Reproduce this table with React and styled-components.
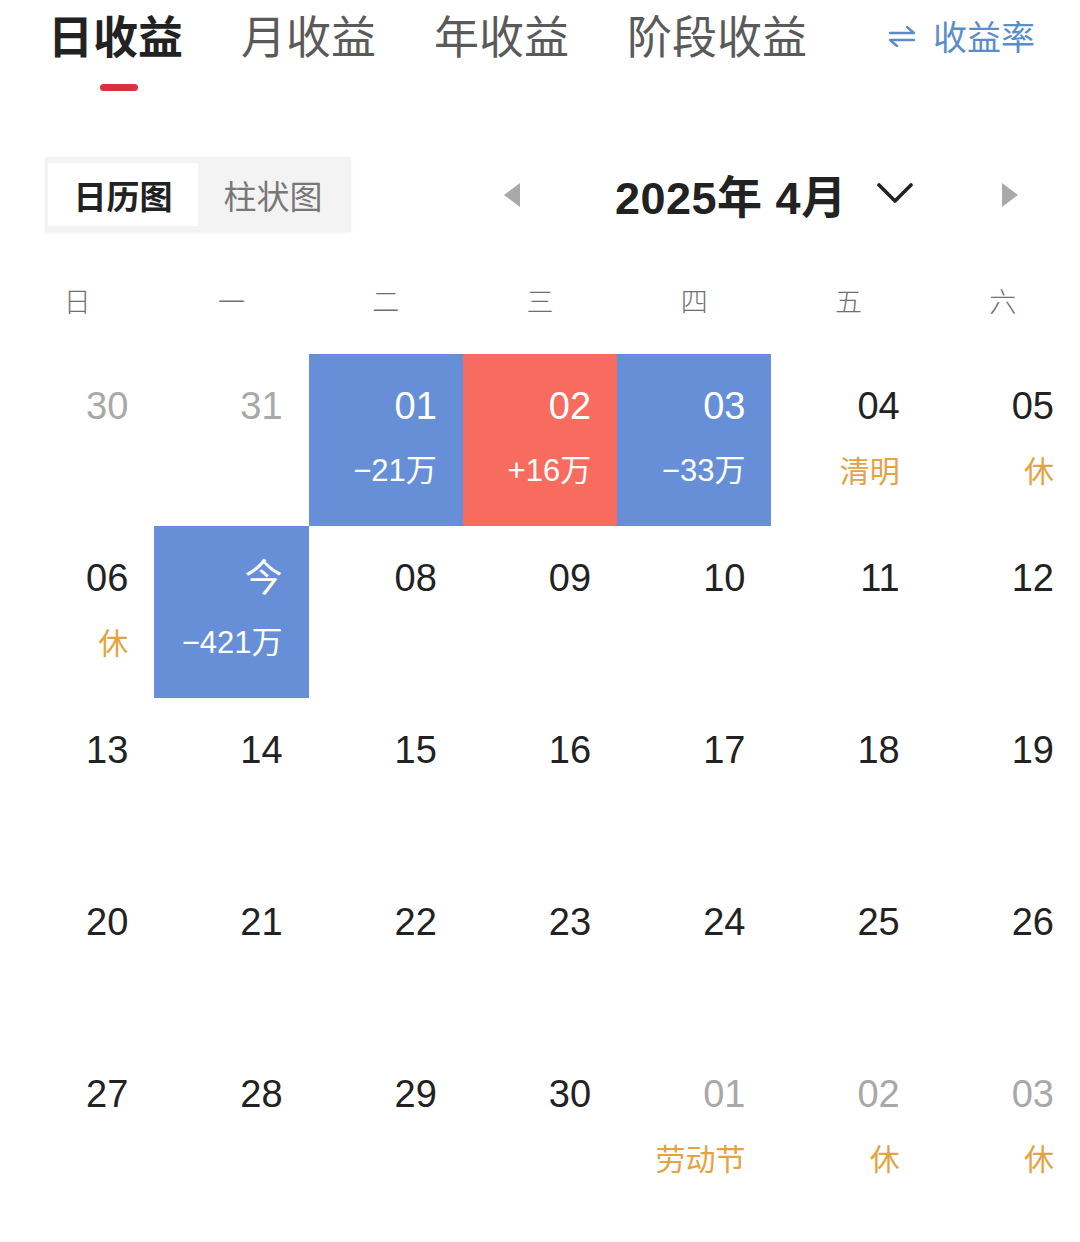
import React from "react";
import styled, { createGlobalStyle } from "styled-components";

const GlobalStyle = createGlobalStyle`
  html, body {
    margin: 0;
    padding: 0;
    background: #ffffff;
  }
  body {
    font-family: "Liberation Sans", "Noto Sans CJK SC", sans-serif;
    color: #222;
  }
`;

const tabs = ["日收益", "月收益", "年收益", "阶段收益"];
const weekdays = ["日", "一", "二", "三", "四", "五", "六"];

// tone: blue / red for days with a result, muted for days outside the month
const days = [
  { n: "30", muted: true },
  { n: "31", muted: true },
  { n: "01", tone: "blue", sub: "−21万" },
  { n: "02", tone: "red", sub: "+16万" },
  { n: "03", tone: "blue", sub: "−33万" },
  { n: "04", holiday: "清明" },
  { n: "05", holiday: "休" },
  { n: "06", holiday: "休" },
  { n: "今", tone: "blue", sub: "−421万" },
  { n: "08" },
  { n: "09" },
  { n: "10" },
  { n: "11" },
  { n: "12" },
  { n: "13" },
  { n: "14" },
  { n: "15" },
  { n: "16" },
  { n: "17" },
  { n: "18" },
  { n: "19" },
  { n: "20" },
  { n: "21" },
  { n: "22" },
  { n: "23" },
  { n: "24" },
  { n: "25" },
  { n: "26" },
  { n: "27" },
  { n: "28" },
  { n: "29" },
  { n: "30" },
  { n: "01", muted: true, holiday: "劳动节" },
  { n: "02", muted: true, holiday: "休" },
  { n: "03", muted: true, holiday: "休" },
];

const tones = {
  blue: "#668fd8",
  red: "#f76c5f",
};

const SwapIcon = () => (
  <svg width="30" height="22" viewBox="0 0 30 22" fill="none">
    <path
      d="M3 8 H27 L20 2"
      stroke="currentColor"
      strokeWidth="2.4"
      strokeLinecap="round"
      strokeLinejoin="round"
    />
    <path
      d="M27 15 H3 L10 21"
      stroke="currentColor"
      strokeWidth="2.4"
      strokeLinecap="round"
      strokeLinejoin="round"
    />
  </svg>
);

const Chevron = () => (
  <svg width="36" height="22" viewBox="0 0 36 22" fill="none">
    <path
      d="M2 3 L18 19 L34 3"
      stroke="#222"
      strokeWidth="3.6"
      strokeLinecap="round"
      strokeLinejoin="round"
    />
  </svg>
);

const Triangle = ({ dir }) => (
  <svg width="18" height="26" viewBox="0 0 18 26">
    {dir === "left" ? (
      <path d="M17 1 L1 13 L17 25 Z" fill="#a9a9a9" />
    ) : (
      <path d="M1 1 L17 13 L1 25 Z" fill="#a9a9a9" />
    )}
  </svg>
);

const App = () => {
  return (
    <Page>
      <GlobalStyle />
      <TabBar>
        {tabs.map((t, i) => (
          <Tab key={t}>
            <TabLabel active={i === 0}>{t}</TabLabel>
            {i === 0 && <Indicator />}
          </Tab>
        ))}
        <RateLink>
          <SwapIcon />
          <span>收益率</span>
        </RateLink>
      </TabBar>

      <Toolbar>
        <Segmented>
          <Segment active>日历图</Segment>
          <Segment>柱状图</Segment>
        </Segmented>
        <MonthNav>
          <NavArrow>
            <Triangle dir="left" />
          </NavArrow>
          <MonthTitle>2025年 4月</MonthTitle>
          <ChevronWrap>
            <Chevron />
          </ChevronWrap>
          <NavArrow right>
            <Triangle dir="right" />
          </NavArrow>
        </MonthNav>
      </Toolbar>

      <WeekRow>
        {weekdays.map((w) => (
          <WeekDay key={w}>{w}</WeekDay>
        ))}
      </WeekRow>

      <Grid>
        {days.map((d, i) => (
          <Cell key={i} tone={d.tone}>
            <DayNum muted={d.muted} tone={d.tone}>
              {d.n}
            </DayNum>
            {d.sub && <Amount>{d.sub}</Amount>}
            {d.holiday && <Holiday>{d.holiday}</Holiday>}
          </Cell>
        ))}
      </Grid>
    </Page>
  );
};

const Page = styled.div`
  width: 1080px;
  height: 1242px;
  overflow: hidden;
  background: #fff;
`;

const TabBar = styled.div`
  display: flex;
  align-items: flex-start;
  padding: 4px 0 0 48px;
  height: 87px;
`;

const Tab = styled.div`
  display: flex;
  flex-direction: column;
  align-items: center;
  margin-right: 58px;
`;

const TabLabel = styled.div`
  font-family: "Noto Sans CJK SC", sans-serif;
  font-size: 45px;
  line-height: 62px;
  font-weight: ${(p) => (p.active ? 700 : 400)};
  color: ${(p) => (p.active ? "#222" : "#5a5a5a")};
`;

const Indicator = styled.div`
  width: 38px;
  height: 7px;
  border-radius: 4px;
  background: #d9323f;
  margin-top: 18px;
  margin-left: 6px;
`;

const RateLink = styled.div`
  display: flex;
  align-items: center;
  gap: 16px;
  margin-left: 22px;
  height: 62px;
  color: #5b8dca;
  font-family: "Noto Sans CJK SC", sans-serif;
  font-size: 34px;

  svg {
    margin-top: 2px;
  }
`;

const Toolbar = styled.div`
  display: flex;
  align-items: center;
  margin-top: 66px;
  padding-left: 45px;
  height: 75px;
`;

const Segmented = styled.div`
  display: flex;
  align-items: stretch;
  width: 306px;
  height: 75px;
  box-sizing: border-box;
  padding: 6px 3px;
  background: #f3f3f3;
  box-shadow: 0 1px 3px rgba(0, 0, 0, 0.05);
`;

const Segment = styled.div`
  flex: 1;
  display: flex;
  align-items: center;
  justify-content: center;
  font-family: "Noto Sans CJK SC", sans-serif;
  font-size: 33px;
  background: ${(p) => (p.active ? "#fff" : "transparent")};
  color: ${(p) => (p.active ? "#222" : "#777")};
  font-weight: ${(p) => (p.active ? 700 : 400)};
`;

const MonthNav = styled.div`
  display: flex;
  align-items: center;
  margin-left: 152px;
`;

const NavArrow = styled.div`
  display: flex;
  align-items: center;
  margin-left: ${(p) => (p.right ? "88px" : "0")};
`;

const MonthTitle = styled.div`
  margin-left: 94px;
  font-family: "Liberation Sans", "Noto Sans CJK SC", sans-serif;
  font-size: 45px;
  font-weight: 700;
  letter-spacing: 0.5px;
  color: #222;
  white-space: nowrap;
`;

const ChevronWrap = styled.div`
  display: flex;
  margin-left: 30px;
  margin-top: -4px;
`;

const WeekRow = styled.div`
  display: grid;
  grid-template-columns: repeat(7, 1fr);
  margin-top: 49px;
`;

const WeekDay = styled.div`
  text-align: center;
  font-family: "Noto Sans CJK SC", sans-serif;
  font-size: 27px;
  line-height: 40px;
  color: #707070;
  font-weight: 300;
`;

const Grid = styled.div`
  display: grid;
  grid-template-columns: repeat(7, 1fr);
  grid-auto-rows: 172px;
  margin-top: 33px;
`;

const Cell = styled.div`
  display: flex;
  flex-direction: column;
  align-items: flex-end;
  box-sizing: border-box;
  padding: 30px 26px 0 0;
  background: ${(p) => (p.tone ? tones[p.tone] : "transparent")};
`;

const DayNum = styled.div`
  font-family: "Liberation Sans", "Noto Sans CJK SC", sans-serif;
  font-size: 38px;
  line-height: 44px;
  color: ${(p) => (p.tone ? "#fff" : p.muted ? "#a8a8a8" : "#222")};
`;

const Amount = styled.div`
  margin-top: 23px;
  font-family: "Liberation Sans", "Noto Sans CJK SC", sans-serif;
  font-size: 31px;
  line-height: 40px;
  color: #fff;
`;

const Holiday = styled.div`
  margin-top: 21px;
  font-family: "Noto Sans CJK SC", sans-serif;
  font-size: 30px;
  line-height: 40px;
  color: #e4a240;
`;

export default App;
